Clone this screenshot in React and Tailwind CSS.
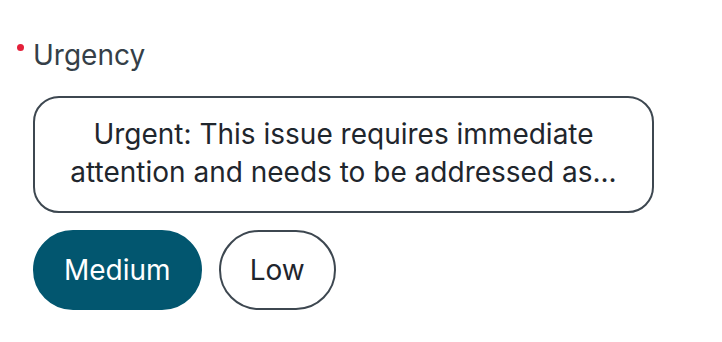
import React, { useState } from 'react';

const options = ['Medium', 'Low'];

const App = () => {
  const [urgency, setUrgency] = useState('Medium');

  return (
    <div className="min-h-screen bg-white pl-[33px] pr-4 pt-[35px] font-['Inter',sans-serif] text-[#1f262d]">
      {/* Label */}
      <div className="relative flex items-center">
        <span className="absolute left-[-16px] top-[9px] h-[7px] w-[7px] rounded-full bg-[#e4203a]" />
        <span className="text-[28px] leading-[40px] text-[#353f48]">Urgency</span>
      </div>

      {/* Selected description */}
      <div className="mt-[21px] w-[621px] rounded-[26px] border-2 border-[#3d4750] px-[24px] pt-[17px] pb-[20px] text-center">
        <p className="text-[28px] leading-[38px]">
          Urgent: This issue requires immediate attention and needs to be addressed as...
        </p>
      </div>

      {/* Options */}
      <div className="mt-[17px] flex gap-[17px]">
        {options.map((opt) =>
          opt === urgency ? (
            <button
              key={opt}
              onClick={() => setUrgency(opt)}
              className="flex h-[80px] items-center rounded-full border-2 border-[#02566f] bg-[#02566f] px-[29px] text-[28px] text-white"
            >
              {opt}
            </button>
          ) : (
            <button
              key={opt}
              onClick={() => setUrgency(opt)}
              className="flex h-[80px] items-center rounded-full border-2 border-[#3d4750] bg-white px-[29px] text-[28px] text-[#1f262d]"
            >
              {opt}
            </button>
          )
        )}
      </div>
    </div>
  );
};

export default App;
